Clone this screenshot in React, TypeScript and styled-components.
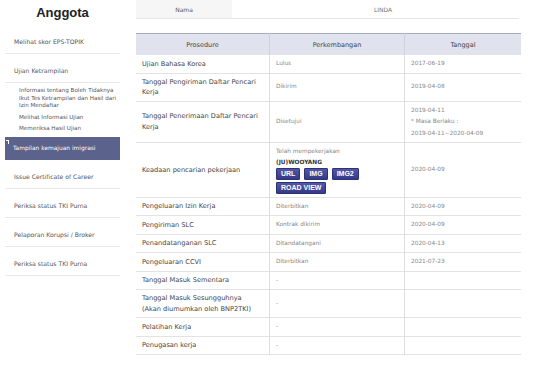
import React from 'react';
import styled, { createGlobalStyle } from 'styled-components';

const GlobalStyle = createGlobalStyle`
  html, body {
    margin: 0;
    padding: 0;
    background: #ffffff;
  }
  body {
    font-family: 'DejaVu Sans', Verdana, sans-serif;
    color: #555;
  }
`;

type Row = {
  key: string;
  procedure: string[];
  status?: string;
  date?: string[];
  hiring?: boolean;
};

const rows: Row[] = [
  { key: 'eps', procedure: ['Ujian Bahasa Korea'], status: 'Lulus', date: ['2017-06-19'] },
  {
    key: 'kirim',
    procedure: ['Tanggal Pengiriman Daftar Pencari', 'Kerja'],
    status: 'Dikirim',
    date: ['2019-04-08'],
  },
  {
    key: 'terima',
    procedure: ['Tanggal Penerimaan Daftar Pencari', 'Kerja'],
    status: 'Disetujui',
    date: ['2019-04-11', '* Masa Berlaku :', '2019-04-11~2020-04-09'],
  },
  { key: 'cari', procedure: ['Keadaan pencarian pekerjaan'], hiring: true, date: ['2020-04-09'] },
  { key: 'izin', procedure: ['Pengeluaran Izin Kerja'], status: 'Diterbitkan', date: ['2020-04-09'] },
  { key: 'slc', procedure: ['Pengiriman SLC'], status: 'Kontrak dikirim', date: ['2020-04-09'] },
  { key: 'ttd', procedure: ['Penandatanganan SLC'], status: 'Ditandatangani', date: ['2020-04-13'] },
  { key: 'ccvi', procedure: ['Pengeluaran CCVI'], status: 'Diterbitkan', date: ['2021-07-23'] },
  { key: 'sementara', procedure: ['Tanggal Masuk Sementara'], status: '-' },
  {
    key: 'sungguh',
    procedure: ['Tanggal Masuk Sesungguhnya', '(Akan diumumkan oleh BNP2TKI)'],
    status: '-',
  },
  { key: 'latih', procedure: ['Pelatihan Kerja'], status: '-' },
  { key: 'tugas', procedure: ['Penugasan kerja'], status: '-' },
];

const Page = styled.div`
  display: flex;
  align-items: flex-start;
  width: 537px;
`;

const Sidebar = styled.nav`
  flex: 0 0 115px;
  width: 115px;
  margin-left: 5px;
  display: flex;
  flex-direction: column;
`;

const SideTitle = styled.div`
  width: 100%;
  height: 25px;
  line-height: 25px;
  text-align: center;
  font-family: 'Liberation Sans', Arial, sans-serif;
  font-size: 13px;
  font-weight: bold;
  color: #222;
`;

const MenuItem = styled.div`
  padding: 12.5px 0 7.5px 9px;
  font-size: 6.1px;
  line-height: 8px;
  color: #555;
  border-bottom: 1px solid #e9e9e9;
  white-space: nowrap;
`;

const SubMenu = styled.ul`
  list-style: none;
  margin: 0;
  padding: 4px 0 0 14px;
`;

const SubItem = styled.li`
  font-size: 5.6px;
  line-height: 7.5px;
  color: #555;
  white-space: nowrap;

  & + & {
    margin-top: 4px;
  }
`;

const ActiveItem = styled.div`
  position: relative;
  margin-top: 4.5px;
  height: 23px;
  line-height: 23px;
  padding-left: 8px;
  background: #5b628b;
  color: #fff;
  font-size: 5.9px;
  white-space: nowrap;

  &::before {
    content: '';
    position: absolute;
    left: 1px;
    top: 3px;
    width: 2px;
    height: 3px;
    border-top: 1px solid #fff;
    border-right: 1px solid #fff;
  }
`;

const Main = styled.main`
  margin-left: 16px;
  width: 383px;
  display: flex;
  flex-direction: column;
`;

const NameRow = styled.div`
  display: flex;
  height: 18px;
  border-bottom: 1px solid #e6e6e6;
`;

const NameLabel = styled.div`
  width: 96px;
  background: #f6f6f6;
  display: flex;
  align-items: center;
  justify-content: center;
  font-size: 6px;
  color: #555;
`;

const NameValue = styled.div`
  flex: 1;
  display: flex;
  align-items: center;
  justify-content: center;
  padding-left: 15px;
  font-size: 6px;
  color: #777;
`;

const Table = styled.table`
  margin-top: 14px;
  width: 383px;
  border-collapse: collapse;
  table-layout: fixed;
  border-top: 1px solid #a9acbf;
`;

const HeadCell = styled.th<{ $w: number }>`
  width: ${(p) => p.$w}px;
  height: 21px;
  padding: 0;
  background: #e0e2ee;
  font-size: 6.5px;
  font-weight: normal;
  color: #444;
  text-align: center;
  & + & {
    border-left: 1px solid #ced1df;
  }
`;

const BodyRow = styled.tr`
  border-bottom: 1px solid #e3e3e3;
`;

const Cell = styled.td<{ $main?: boolean }>`
  padding: 3px 5px 3px 6px;
  vertical-align: middle;
  font-size: ${(p) => (p.$main ? '6.6px' : '5.8px')};
  line-height: ${(p) => (p.$main ? '10.5px' : '11.5px')};
  color: ${(p) => (p.$main ? '#444' : '#888')};
  & + & {
    border-left: 1px solid #dedede;
  }
`;

const Company = styled.div`
  font-weight: bold;
  color: #333;
  line-height: 9px;
`;

const Buttons = styled.div`
  display: flex;
  flex-wrap: wrap;
  gap: 2px 4px;
  width: 86px;
  margin-top: 1px;
`;

const LinkButton = styled.span`
  display: inline-flex;
  align-items: center;
  height: 10px;
  padding: 0 4px;
  border: 1px solid #2d3176;
  border-radius: 1px;
  background: linear-gradient(#5257a8, #353a88);
  color: #fff;
  font-family: 'Liberation Sans', Arial, sans-serif;
  font-size: 7px;
  font-weight: bold;
  line-height: 10px;
`;

const menuTop = ['Melihat skor EPS-TOPIK', 'Ujian Ketrampilan'];
const menuBottom = [
  'Issue Certificate of Career',
  'Periksa status TKI Purna',
  'Pelaporan Korupsi / Broker',
  'Periksa status TKI Purna',
];

export default function App() {
  return (
    <Page>
      <GlobalStyle />
      <Sidebar>
        <SideTitle>Anggota</SideTitle>
        {menuTop.map((label) => (
          <MenuItem key={label}>{label}</MenuItem>
        ))}
        <SubMenu>
          <SubItem>
            Informasi tentang Boleh Tidaknya
            <br />
            Ikut Tes Ketrampilan dan Hasil dari
            <br />
            Izin Mendaftar
          </SubItem>
          <SubItem>Melihat Informasi Ujian</SubItem>
          <SubItem>Memeriksa Hasil Ujian</SubItem>
        </SubMenu>
        <ActiveItem>Tampilan kemajuan imigrasi</ActiveItem>
        {menuBottom.map((label, i) => (
          <MenuItem key={label + i}>{label}</MenuItem>
        ))}
      </Sidebar>
      <Main>
        <NameRow>
          <NameLabel>Nama</NameLabel>
          <NameValue>LINDA</NameValue>
        </NameRow>
        <Table>
          <thead>
            <tr>
              <HeadCell $w={133}>Prosedure</HeadCell>
              <HeadCell $w={134}>Perkembangan</HeadCell>
              <HeadCell $w={116}>Tanggal</HeadCell>
            </tr>
          </thead>
          <tbody>
            {rows.map((row) => (
              <BodyRow key={row.key}>
                <Cell $main>
                  {row.procedure.map((line) => (
                    <div key={line}>{line}</div>
                  ))}
                </Cell>
                <Cell>
                  {row.hiring ? (
                    <>
                      <div>Telah mempekerjakan</div>
                      <Company>(JU)WOOYANG</Company>
                      <Buttons>
                        <LinkButton>URL</LinkButton>
                        <LinkButton>IMG</LinkButton>
                        <LinkButton>IMG2</LinkButton>
                        <LinkButton>ROAD VIEW</LinkButton>
                      </Buttons>
                    </>
                  ) : (
                    row.status
                  )}
                </Cell>
                <Cell>
                  {row.date?.map((line) => (
                    <div key={line}>{line}</div>
                  ))}
                </Cell>
              </BodyRow>
            ))}
          </tbody>
        </Table>
      </Main>
    </Page>
  );
}
